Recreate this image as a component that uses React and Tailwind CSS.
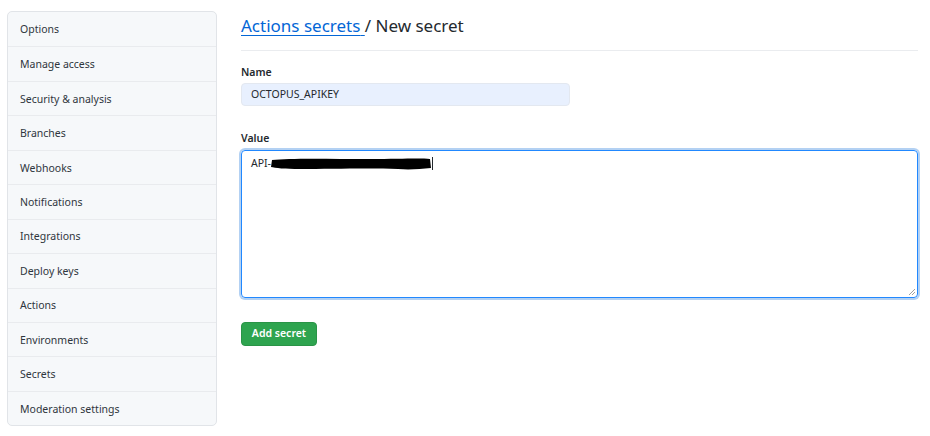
const menu = [
  'Options',
  'Manage access',
  'Security & analysis',
  'Branches',
  'Webhooks',
  'Notifications',
  'Integrations',
  'Deploy keys',
  'Actions',
  'Environments',
  'Secrets',
  'Moderation settings',
];

const font = { fontFamily: '"Segoe UI", "Noto Sans", "Open Sans", sans-serif' };

const Sidebar = () => (
  <nav className="w-[210px] shrink-0 self-start rounded-[5px] border border-[#e1e4e8] bg-[#f6f8fa] overflow-hidden">
    {menu.map((item, i) => (
      <div
        key={item}
        className={`flex h-[34.45px] items-center pl-[12px] pt-[2px] text-[10.5px] text-[#2f363d] ${
          i > 0 ? 'border-t border-[#e9ebee]' : ''
        }`}
      >
        {item}
      </div>
    ))}
  </nav>
);

const App = () => {
  return (
    <div className="flex h-[436px] w-[930px] items-start bg-white pl-[7px] pr-[12px] pt-[11px]" style={font}>
      <Sidebar />

      <main className="ml-[24px] flex-1">
        {/* Title */}
        <h2 className="-mt-[11px] border-b border-[#eaecef] pb-[12px] pt-[14px] text-[17px] leading-[24px] text-[#24292e]">
          <a href="#" className="text-[#0366d6] underline underline-offset-[3px]">
            Actions secrets{' '}
          </a>
          / New secret
        </h2>

        {/* Name */}
        <label className="mt-[14px] block text-[10.5px] font-semibold leading-[14px] text-[#24292e]">Name</label>
        <div className="mt-[4px] flex h-[23px] w-[329px] items-center rounded-[4px] border border-[#e3e8f0] bg-[#e8f0fe] px-[9px] text-[10.5px] text-[#24292e]">
          OCTOPUS_APIKEY
        </div>

        {/* Value */}
        <label className="mt-[25px] block text-[10.5px] font-semibold leading-[14px] text-[#24292e]">Value</label>
        <div className="relative mt-[5px] h-[148px] rounded-[4px] border border-[#2188ff] px-[9px] pt-[5px] text-[10.5px] text-[#24292e] shadow-[0_0_0_2px_rgba(3,102,214,0.3)]">
          <div className="flex items-center">
            <span>API-</span>
            <svg width="162" height="13" viewBox="0 0 162 13" className="-ml-[1px]">
              <path
                d="M2 3 C 20 1, 60 2, 100 2 C 130 2, 150 1, 160 2 L 161 11 C 150 12, 140 13, 128 12 C 100 11, 60 12, 30 12 C 15 12, 5 11, 1 10 Z"
                fill="#000"
              />
            </svg>
            <span className="h-[13px] w-[1px] bg-[#24292e]" />
          </div>
          <svg width="8" height="8" viewBox="0 0 8 8" className="absolute bottom-[1px] right-[1px]">
            <path d="M7 1 L1 7 M7 4 L4 7" stroke="#a0a0a0" strokeWidth="1" />
          </svg>
        </div>

        <button className="mt-[24px] h-[24px] w-[76px] rounded-[4px] border border-[#2a9447] bg-[#2ea44f] text-[10.5px] font-semibold text-white">
          Add secret
        </button>
      </main>
    </div>
  );
};

export default App;
